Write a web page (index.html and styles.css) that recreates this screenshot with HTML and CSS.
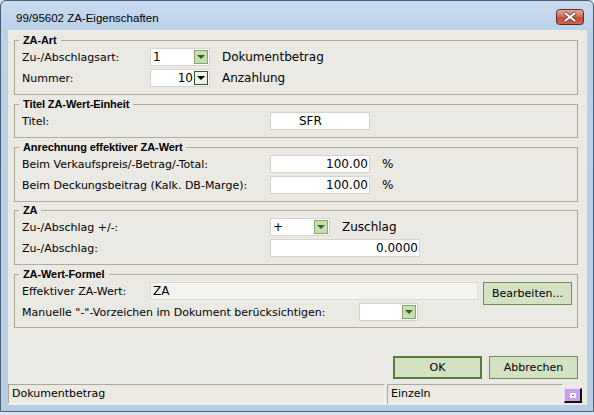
FILE: index.html
```html
<!DOCTYPE html>
<html>
<head>
<meta charset="utf-8">
<title>99/95602 ZA-Eigenschaften</title>
<link rel="stylesheet" href="styles.css">
</head>
<body>
<div class="window">
  <div class="titlebar">
    <span class="title">99/95602 ZA-Eigenschaften</span>
    <span class="close">
      <svg width="28" height="16" viewBox="0 0 28 16">
        <defs>
          <linearGradient id="cg" x1="0" y1="0" x2="0" y2="1">
            <stop offset="0" stop-color="#e7a89c"/>
            <stop offset="0.45" stop-color="#d2705f"/>
            <stop offset="0.55" stop-color="#c24a38"/>
            <stop offset="1" stop-color="#d0664e"/>
          </linearGradient>
        </defs>
        <rect x="0.5" y="0.5" width="27" height="15" rx="3" fill="url(#cg)" stroke="#5e2a2a"/>
        <path d="M9.5 4.5 L18.5 11.5 M18.5 4.5 L9.5 11.5" stroke="#6b3a36" stroke-width="3.6" stroke-linecap="round"/>
        <path d="M9.5 4.5 L18.5 11.5 M18.5 4.5 L9.5 11.5" stroke="#ffffff" stroke-width="2.2" stroke-linecap="round"/>
      </svg>
    </span>
  </div>
  <div class="client">
    <div class="groups">
      <section class="group">
        <span class="legend">ZA-Art</span>
        <div class="row">
          <span class="lbl lw128">Zu-/Abschlagsart:</span>
          <div class="combo w60"><span class="val">1</span><span class="arrow"></span></div>
          <span class="after">Dokumentbetrag</span>
        </div>
        <div class="row">
          <span class="lbl lw128">Nummer:</span>
          <div class="combo w60 alignright"><span class="val">10</span><span class="arrow focus"></span></div>
          <span class="after">Anzahlung</span>
        </div>
      </section>

      <section class="group">
        <span class="legend">Titel ZA-Wert-Einheit</span>
        <div class="row">
          <span class="lbl lw248">Titel:</span>
          <div class="field w100 pad-sfr">SFR</div>
        </div>
      </section>

      <section class="group">
        <span class="legend">Anrechnung effektiver ZA-Wert</span>
        <div class="row">
          <span class="lbl lw248">Beim Verkaufspreis/-Betrag/-Total:</span>
          <div class="field w100 num">100.00</div>
          <span class="after">%</span>
        </div>
        <div class="row">
          <span class="lbl lw248">Beim Deckungsbeitrag (Kalk. DB-Marge):</span>
          <div class="field w100 num">100.00</div>
          <span class="after">%</span>
        </div>
      </section>

      <section class="group g4">
        <span class="legend">ZA</span>
        <div class="row">
          <span class="lbl lw248">Zu-/Abschlag +/-:</span>
          <div class="combo w60"><span class="val plus">+</span><span class="arrow"></span></div>
          <span class="after">Zuschlag</span>
        </div>
        <div class="row">
          <span class="lbl lw248">Zu-/Abschlag:</span>
          <div class="field w150 num">0.0000</div>
        </div>
      </section>

      <section class="group g5">
        <span class="legend">ZA-Wert-Formel</span>
        <div class="row">
          <span class="lbl lw128">Effektiver ZA-Wert:</span>
          <div class="field w328 disabled">ZA</div>
          <button class="btn edit">Bearbeiten...</button>
        </div>
        <div class="row">
          <span class="lbl lw337">Manuelle "-"-Vorzeichen im Dokument berücksichtigen:</span>
          <div class="combo w59"><span class="val"></span><span class="arrow"></span></div>
        </div>
      </section>
    </div>

    <div class="buttons">
      <button class="btn default">OK</button>
      <button class="btn">Abbrechen</button>
    </div>

    <div class="status">
      <div class="panel p1">Dokumentbetrag</div>
      <div class="panel p2">Einzeln</div>
      <div class="grip"><span class="grip-dot"></span></div>
    </div>
  </div>
</div>
</body>
</html>
```

FILE: styles.css
```css
* { box-sizing: border-box; }

html, body {
  margin: 0;
  padding: 0;
}

body {
  width: 594px;
  height: 415px;
  overflow: hidden;
  background: #d9e5f1;
  font-family: "DejaVu Sans", sans-serif;
  font-size: 11px;
  color: #000;
}

.window {
  width: 594px;
  height: 412px;
  border: 1px solid #4d5e72;
  border-radius: 6px 6px 0 0;
  background: linear-gradient(#cadcf0 0px, #bad1ea 29px, #b6cee8 100%);
  padding: 0 6px 6px 7px;
  display: flex;
  flex-direction: column;
}

.titlebar {
  height: 29px;
  flex: none;
  display: flex;
  align-items: center;
  justify-content: space-between;
  padding: 0 3px 0 8px;
}

.title {
  font-family: "Liberation Sans", Arial, sans-serif;
  font-size: 11.5px;
  color: #000;
  margin-top: 4px;
}

.close {
  display: flex;
  margin-top: 3px;
}

.client {
  flex: 1;
  background: #ebe9e4;
  display: flex;
  flex-direction: column;
}

.groups {
  padding: 10px 9px 0 6px;
  display: flex;
  flex-direction: column;
  gap: 9px;
}

.group {
  position: relative;
  border: 1px solid #b3ab9a;
  padding: 7px 7px 7px 7px;
}

.group.g4 { margin-top: -1px; }
.group.g5 { padding-bottom: 6px; }

.legend {
  position: absolute;
  top: -7px;
  left: 4px;
  padding: 0 4px;
  line-height: 13px;
  background: #ebe9e4;
  font-family: "Liberation Sans", Arial, sans-serif;
  font-weight: bold;
  font-size: 11px;
  letter-spacing: -0.1px;
}

.row {
  display: flex;
  align-items: center;
  height: 18px;
}

.row + .row { margin-top: 3px; }

.lbl {
  flex: none;
  white-space: nowrap;
}

.lw128 { width: 128px; }
.lw248 { width: 248px; }
.lw337 { width: 337px; }

.after {
  margin-left: 12px;
  font-size: 12px;
}

.combo, .field {
  flex: none;
  height: 18px;
  background: #fff;
  border: 1px solid #d7d4cb;
  font-size: 12px;
  line-height: 16px;
}

.combo {
  position: relative;
  display: flex;
  align-items: center;
  padding: 0 18px 0 2px;
}

.combo.alignright { justify-content: flex-end; padding-right: 16px; }
.combo .val.plus { margin-left: 0; }

.arrow {
  position: absolute;
  right: 1px;
  top: 1px;
  width: 14px;
  height: 14px;
  background: #c7ddb2;
  border: 1px solid #86a866;
}

.arrow::after {
  content: "";
  position: absolute;
  left: 2px;
  top: 4px;
  border-left: 4px solid transparent;
  border-right: 4px solid transparent;
  border-top: 4px solid #3e5c2a;
}

.arrow.focus {
  background: #eef2ea;
  border-color: #39512a;
}

.arrow.focus::after { border-top-color: #000; }

.w59 { width: 59px; }
.w60 { width: 60px; }
.w100 { width: 100px; }
.w150 { width: 150px; }
.w328 { width: 328px; }

.field { padding: 0 2px; white-space: nowrap; }
.field.num { text-align: right; padding-right: 1px; }
.field.pad-sfr { padding-left: 28px; }

.field.disabled {
  background: #f4f3f0;
  border-color: #dddad3;
}

.btn {
  flex: none;
  height: 23px;
  width: 89px;
  padding: 0;
  margin: 0;
  background: #d3e2c3;
  border: 1px solid #6f8e54;
  font-family: "DejaVu Sans", sans-serif;
  font-size: 11px;
  color: #000;
  border-radius: 0;
}

.btn.edit {
  align-self: flex-start;
  margin-left: 5px;
}

.btn.default {
  border: 2px solid #5b7b3c;
}

.buttons {
  display: flex;
  justify-content: flex-end;
  gap: 7px;
  margin-top: 28px;
  padding-right: 9px;
}

.status {
  margin-top: 5px;
  height: 20px;
  display: flex;
  align-items: stretch;
}

.panel {
  border-top: 1px solid #b0a896;
  border-left: 1px solid #b0a896;
  border-right: 1px solid #f7f6f3;
  border-bottom: 1px solid #f7f6f3;
  padding-left: 3px;
  line-height: 17px;
  white-space: nowrap;
}

.p1 { width: 377px; }
.p2 { width: 176px; margin-left: 2px; }

.grip {
  width: 18px;
  height: 15px;
  margin: 4px 0 0 1px;
  background: #c99ff0;
  border-top: 1px solid #e8d8fa;
  border-left: 1px solid #e8d8fa;
  border-right: 2px solid #111;
  border-bottom: 2px solid #111;
  display: flex;
  align-items: center;
  justify-content: center;
}

.grip-dot {
  width: 6px;
  height: 5px;
  background: #fff;
  border: 2px solid #fff;
  box-shadow: inset 0 0 0 1px #fff;
  position: relative;
}

.grip-dot::after {
  content: "";
  position: absolute;
  left: 0;
  top: 0;
  width: 2px;
  height: 1px;
  background: #6a4a8a;
}
```
